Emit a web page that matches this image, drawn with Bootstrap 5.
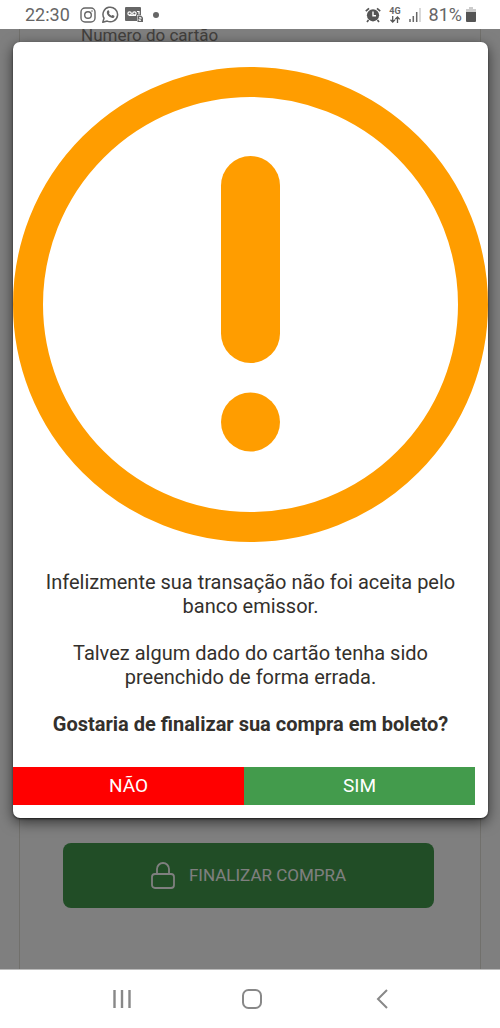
<!DOCTYPE html>
<html lang="pt-BR">
<head>
<meta charset="utf-8">
<meta name="viewport" content="width=device-width, initial-scale=1">
<title>Finalizar compra</title>
<link href="https://cdn.jsdelivr.net/npm/bootstrap@5.3.0/dist/css/bootstrap.min.css" rel="stylesheet">
<style>
  body { font-family: Roboto, "Noto Sans", sans-serif; color: #33302c; }
  .status-bar { height: 29px; padding: 0 24px 0 25px; color: #666; font-size: 18px; line-height: 30px; }
  .status-bar svg, .phone-nav svg { display: block; }
  .notices { gap: 6px; }
  .clock { margin-right: 4px; }
  .net-type { font-size: 9px; line-height: 9px; font-weight: 700; }
  .checkout { margin: 0 19px; padding: 0 46px 61px 43px; border: solid #e3e0d8; border-width: 0 1px; }
  .field-label { font-size: 17px; line-height: 20px; margin: -4px 0 0 18px; color: #85807a; }
  .btn-checkout { --bs-btn-color: #fff; --bs-btn-bg: #429b4d; --bs-btn-hover-color: #fff; --bs-btn-hover-bg: #37853f; height: 65px; gap: 14px; border: 0; border-radius: 8px; font-size: 17px; }
  .shade { background: rgba(0, 0, 0, .5); padding: 13px 12px 0 13px; }
  .dialog-box { border-radius: 7px; padding: 25px 0 13px; box-shadow: 0 1px 2px rgba(0, 0, 0, .6), 0 4px 14px rgba(0, 0, 0, .6); }
  .message { padding: 28px 24px 8px; font-size: 20px; line-height: 24px; }
  .message p { margin-bottom: 23px; }
  .choices { margin-right: 13px; }
  .btn-choice { --bs-btn-color: #fff; --bs-btn-hover-color: #fff; height: 38px; padding: 0; border: 0; font-size: 19px; }
  .btn-no { --bs-btn-bg: #f00; --bs-btn-hover-bg: #d90000; }
  .btn-yes { --bs-btn-bg: #439b4c; --bs-btn-hover-bg: #37853f; }
  .phone-nav { height: 59px; padding: 0 53px 0 57px; border-top: 1px solid #bbb; }
  .phone-nav button { flex: 1 1 0; }
</style>
</head>
<body class="d-flex flex-column vh-100 bg-white overflow-hidden">

<header class="status-bar d-flex align-items-center justify-content-between flex-shrink-0">
  <div class="notices d-flex align-items-center">
    <span class="clock">22:30</span>
    <svg width="16" height="16" viewBox="0 0 16 16" fill="none" stroke="#666" stroke-width="1.4" aria-label="Instagram"><rect x="1" y="1" width="14" height="14" rx="4"/><circle cx="8" cy="8" r="3.3"/><circle cx="12" cy="4" r=".8" fill="#666" stroke="none"/></svg>
    <svg width="17" height="17" viewBox="1 0 17 17" aria-label="WhatsApp"><path d="M1.800 16.200 3 12.200A7.300 7.300 0 1 1 6.200 15.100Z" fill="none" stroke="#666" stroke-width="1.500" stroke-linejoin="round"/><path d="M6.700 4.500c.5-.4 1-.3 1.200.2l.6 1.400c.1.400-.2.800-.6 1.200.6 1.200 1.500 2 2.700 2.500.5-.6.800-.9 1.200-.7l1.400.7c.5.300.3 1.200-.2 1.700-1.200 1-3 .4-4.600-.7-1.700-1.300-3-3.300-2.500-5 .1-.6.400-1 .8-1.300Z" fill="#666"/></svg>
    <svg width="18" height="15" viewBox="0 0 18 15" aria-label="Correio de voz"><path d="M1 0h14q1 0 1 1v7h-4v6H1q-1 0-1-1V1q0-1 1-1Z" fill="#666"/><g fill="none" stroke="#fff" stroke-width="1.200"><circle cx="4.600" cy="6.500" r="1.700"/><circle cx="9.400" cy="6.500" r="1.700"/><path d="M4 8.400h7M12 4.500h2v3"/></g><path d="M12.500 8.500h3.500l2 2V15h-5.500Z" fill="#666"/><path d="M14 10.500h2v1.500h-2v1.500h2" fill="none" stroke="#fff" stroke-width=".8"/></svg>
    <svg class="ms-1" width="6" height="6" viewBox="0 0 6 6"><circle cx="3" cy="3" r="3" fill="#666"/></svg>
  </div>
  <div class="d-flex align-items-center gap-2">
    <svg width="16" height="16" viewBox="0 0 16 16" aria-label="Alarme"><circle cx="8" cy="8.300" r="6.100" fill="#555"/><path d="M.8 4.200 4 1.300M15.200 4.200 12 1.300M3.500 13 2 15M12.500 13l1.500 2" stroke="#555" stroke-width="1.700"/><path d="M8 4.500v4.200h3" fill="none" stroke="#fff" stroke-width="1.400"/></svg>
    <div class="net-type text-center">4G
      <svg class="mx-auto" width="10" height="7" viewBox="0 0 10 7" fill="none" stroke="#555" stroke-width="1.300"><path d="M2.700 0v6M.5 3.700l2.200 2.300 2.200-2.300M7.500 7V1M5.300 3.300 7.500 1l2.200 2.300"/></svg>
    </div>
    <svg width="12" height="14" viewBox="0 0 12 14" aria-label="Sinal"><path d="M1 14v-3M4.300 14V8M7.700 14V4" stroke="#666" stroke-width="1.500"/><path d="M11 14V0" stroke="#ccc" stroke-width="1.500"/></svg>
    <div class="d-flex align-items-center gap-1"><span>81%</span>
    <svg width="10" height="15" viewBox="0 0 10 15" aria-label="Bateria"><path d="M3 0h4v2h3v3H0V2h3Z" fill="#ccc"/><path d="M0 5h10v9q0 1-1 1H1q-1 0-1-1Z" fill="#555"/></svg></div>
  </div>
</header>

<main class="position-relative flex-fill overflow-hidden">
  <section class="checkout d-flex flex-column justify-content-between h-100">
    <div class="field-label">Numero do cartão</div>
    <button type="button" class="btn btn-checkout d-flex align-items-center justify-content-center w-100">
      <svg width="24" height="27" viewBox="0 0 24 27" fill="none" stroke="#fff" stroke-width="1.800"><rect x="1" y="12" width="22" height="14" rx="3"/><path d="M6 12V7a6 6 0 0 1 12 0v5"/></svg>
      FINALIZAR COMPRA
    </button>
  </section>

  <div class="shade position-absolute top-0 start-0 w-100 h-100">
    <div class="dialog-box bg-white" role="alertdialog" aria-modal="true" aria-labelledby="question">
      <svg class="d-block w-100" viewBox="0 0 475 475" fill="#ff9d00" aria-label="Atenção"><circle cx="237.500" cy="237.500" r="222.500" fill="none" stroke="#ff9d00" stroke-width="30"/><rect x="208" y="89" width="59" height="207" rx="29.500"/><circle cx="237.500" cy="355" r="29.500"/></svg>
      <div class="message text-center">
        <p>Infelizmente sua transação não foi aceita pelo banco emissor.</p>
        <p>Talvez algum dado do cartão tenha sido preenchido de forma errada.</p>
        <p id="question" class="fw-bold">Gostaria de finalizar sua compra em boleto?</p>
      </div>
      <div class="choices d-flex">
        <button type="button" class="btn btn-choice btn-no rounded-0 w-50">NÃO</button>
        <button type="button" class="btn btn-choice btn-yes rounded-0 w-50">SIM</button>
      </div>
    </div>
  </div>
</main>

<nav class="phone-nav d-flex align-items-center flex-shrink-0" aria-label="Navegação do sistema">
  <button type="button" class="btn p-0 border-0" aria-label="Recentes"><svg class="mx-auto" width="20" height="20" viewBox="0 0 20 20" stroke="#888" stroke-width="2.400"><path d="M2.500 1v18M10 1v18M17.500 1v18"/></svg></button>
  <button type="button" class="btn p-0 border-0" aria-label="Início"><svg class="mx-auto" width="20" height="20" viewBox="0 0 20 20"><rect x="1" y="1" width="18" height="18" rx="5.500" fill="none" stroke="#888" stroke-width="2"/></svg></button>
  <button type="button" class="btn p-0 border-0" aria-label="Voltar"><svg class="mx-auto" width="12" height="20" viewBox="0 0 12 20"><path d="M11 1 2 10l9 9" fill="none" stroke="#888" stroke-width="2"/></svg></button>
</nav>

<script src="https://cdn.jsdelivr.net/npm/bootstrap@5.3.0/dist/js/bootstrap.bundle.min.js"></script>
</body>
</html>
